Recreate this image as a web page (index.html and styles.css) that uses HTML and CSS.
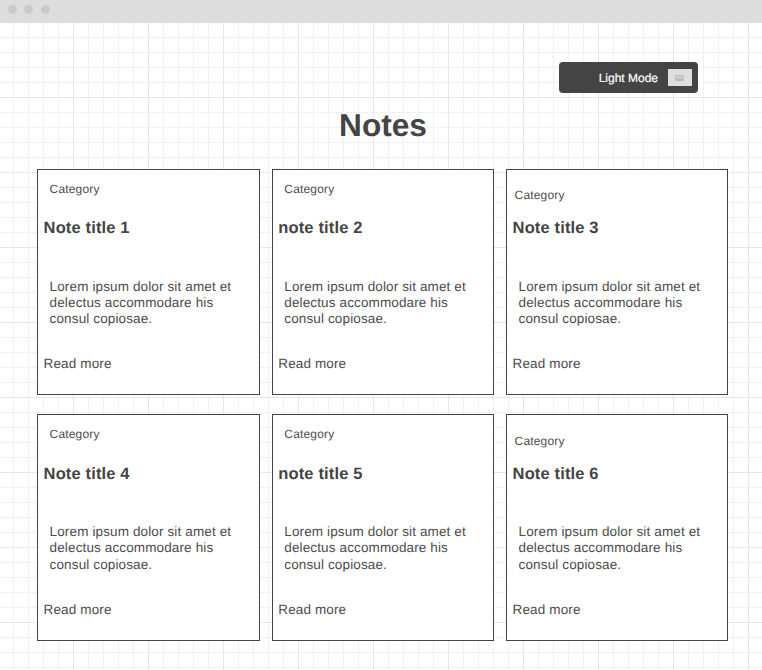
FILE: index.html
```html
<!DOCTYPE html>
<html lang="en">
<head>
<meta charset="utf-8">
<title>Notes</title>
<link rel="stylesheet" href="styles.css">
</head>
<body>
<header class="window-bar"><i class="dot"></i><i class="dot"></i><i class="dot"></i></header>
<main class="canvas">
  <div class="toolbar">
    <button class="mode" type="button">
      <span>Light Mode</span>
      <svg class="mode-icon" width="24" height="17" viewBox="0 0 24 17" aria-hidden="true">
        <rect width="24" height="17" fill="#dedede"/>
        <rect x="7" y="6" width="9" height="6" rx=".5" fill="#bebebe"/>
        <path d="M8.3 7.2H14.7V9.6L12.8 8.8L11.5 9.4L10 8.4L8.3 9.8Z" fill="#d4d4d4"/>
      </svg>
    </button>
  </div>
  <h1 class="page-title">Notes</h1>
  <section class="notes">
    <article class="note">
      <p class="category">Category</p>
      <h2 class="title">Note title 1</h2>
      <p class="excerpt">Lorem ipsum dolor sit amet et delectus accommodare his consul copiosae.</p>
      <p class="more">Read more</p>
    </article>
    <article class="note middle">
      <p class="category">Category</p>
      <h2 class="title">note title 2</h2>
      <p class="excerpt">Lorem ipsum dolor sit amet et delectus accommodare his consul copiosae.</p>
      <p class="more">Read more</p>
    </article>
    <article class="note shifted">
      <p class="category">Category</p>
      <h2 class="title">Note title 3</h2>
      <p class="excerpt">Lorem ipsum dolor sit amet et delectus accommodare his consul copiosae.</p>
      <p class="more">Read more</p>
    </article>
    <article class="note lower">
      <p class="category">Category</p>
      <h2 class="title">Note title 4</h2>
      <p class="excerpt">Lorem ipsum dolor sit amet et delectus accommodare his consul copiosae.</p>
      <p class="more">Read more</p>
    </article>
    <article class="note lower middle">
      <p class="category">Category</p>
      <h2 class="title">note title 5</h2>
      <p class="excerpt">Lorem ipsum dolor sit amet et delectus accommodare his consul copiosae.</p>
      <p class="more">Read more</p>
    </article>
    <article class="note lower shifted">
      <p class="category">Category</p>
      <h2 class="title">Note title 6</h2>
      <p class="excerpt">Lorem ipsum dolor sit amet et delectus accommodare his consul copiosae.</p>
      <p class="more">Read more</p>
    </article>
  </section>
</main>
</body>
</html>
```
FILE: styles.css
```css
* { box-sizing: border-box; }

html, body { height: 100%; }

body {
  margin: 0;
  overflow: hidden;
  background: #fff;
  color: #4c4c4c;
  font-family: "Liberation Sans", Arial, sans-serif;
  text-rendering: geometricPrecision;
}

h1, h2, p { margin: 0; }

.window-bar {
  height: 23px;
  padding: 5px 0 0 8px;
  display: flex;
  gap: 7px;
  background: #ddd;
}

.dot {
  width: 9px;
  height: 9px;
  border-radius: 50%;
  background: #cacaca;
}

.dot:last-child { margin-left: 1px; }

.canvas {
  height: 647px;
  padding: 39px 34px 0 37px;
  background-image:
    linear-gradient(90deg, #e6e6e6 1px, transparent 1px),
    linear-gradient(#e6e6e6 1px, transparent 1px),
    linear-gradient(90deg, #f1f1f1 1px, transparent 1px),
    linear-gradient(#f1f1f1 1px, transparent 1px);
  background-size: 75px 75px, 75px 75px, 15px 15px, 15px 15px;
  background-position: 73px 0, 0 74px, 13px 0, 0 14px;
}

.toolbar {
  display: flex;
  justify-content: flex-end;
  padding-right: 30px;
}

.mode {
  width: 139px;
  height: 31px;
  padding: 0 6px 0 0;
  display: flex;
  align-items: center;
  justify-content: flex-end;
  gap: 10px;
  border: 0;
  border-radius: 4px;
  background: #444;
  color: #fff;
  font: 12px/16px "Liberation Sans", Arial, sans-serif;
  text-rendering: geometricPrecision;
  -webkit-text-stroke: 0.2px #fff;
}

.mode-icon { display: block; }

.page-title {
  height: 76px;
  padding: 14px 0 0 1px;
  text-align: center;
  font-size: 31.6px;
  line-height: 36px;
  color: #444;
}

.notes {
  display: grid;
  grid-template-columns: 223px 222px 222px;
  grid-template-rows: 226px 227px;
  gap: 19px 12px;
}

.note {
  padding: 12px 6px 0 5.6px;
  border: 1px solid #444;
  background: #fff;
}

.middle { padding-left: 5.3px; }

.category {
  height: 35px;
  padding-left: 6px;
  font-size: 12px;
  line-height: 14px;
  letter-spacing: 0.17px;
}

.title {
  height: 62px;
  font-size: 16.5px;
  line-height: 22px;
  letter-spacing: 0.14px;
  color: #444;
}

.excerpt {
  width: 196px;
  height: 77px;
  padding-left: 6px;
  font-size: 13.5px;
  line-height: 16px;
  letter-spacing: 0.13px;
}

.more {
  font-size: 13.5px;
  line-height: 16px;
  letter-spacing: 0.13px;
}

/* Third-column cards hold the category label lower and further left. */
.shifted { padding-top: 18px; }
.shifted .category { height: 29px; padding-left: 2px; }

.lower .category { height: 36px; }
.lower .title { height: 61px; }
.lower .excerpt { height: 78px; line-height: 16.4px; }
.lower.shifted { padding-top: 19px; }
.lower.shifted .category { height: 29px; }
```
